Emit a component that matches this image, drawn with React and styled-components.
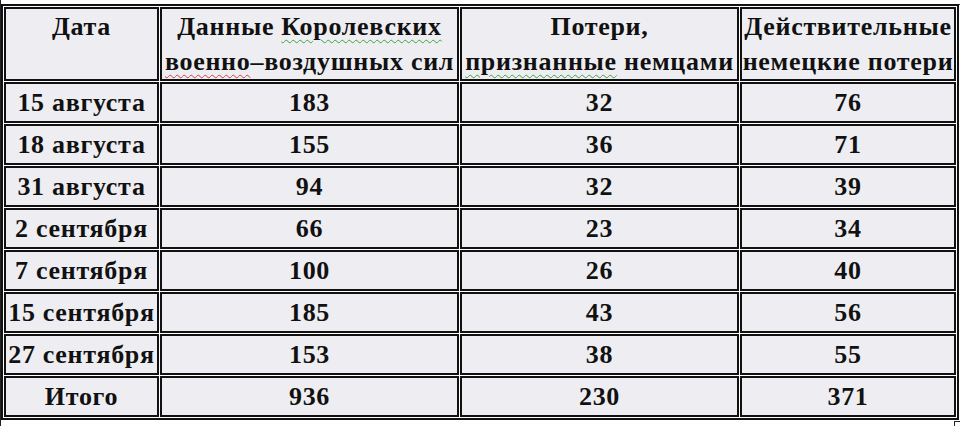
import React from "react";
import styled, { createGlobalStyle } from "styled-components";

const Global = createGlobalStyle`
  html, body { margin: 0; padding: 0; background: #ffffff; }
  body { font-family: "Liberation Serif", "Times New Roman", serif; color: #111; }
`;

const Page = styled.div`
  width: 960px;
  height: 426px;
  overflow: hidden;
  display: flex;
  flex-direction: column;
  padding-top: 4px;
  box-sizing: border-box;
  border-left: 1px solid #222;
`;

const DottedRule = styled.div`
  height: 0;
  border-top: 1px dotted #333;
  margin-bottom: -1px;
`;

const Table = styled.table`
  width: 957px;
  border: 2px solid #111;
  border-spacing: 1px;
  background: #fff;
  table-layout: fixed;
`;

const Cell = styled.td`
  background: #eeeef2;
  border: 2px solid #111;
  box-sizing: border-box;
  padding: 0;
  text-align: center;
  vertical-align: middle;
  font-weight: bold;
  font-size: 26px;
  letter-spacing: 0.7px;
  line-height: ${(p) => (p.$head ? "35px" : "36px")};
  white-space: nowrap;
  overflow: hidden;
  height: ${(p) => (p.$head ? "74px" : "41px")};
  color: #111;
`;

const Squiggle = styled.span`
  text-decoration: underline wavy ${(p) => (p.$red ? "#d04040" : "#3aa53a")};
  text-decoration-thickness: 1px;
  text-underline-offset: 4px;
`;

const Footer = styled.div`
  display: flex;
  justify-content: flex-end;
  padding-top: 1px;
`;

const CornerMark = styled.div`
  width: 5px;
  height: 6px;
  border-left: 1px solid #222;
  border-top: 1px solid #222;
`;

const rows = [
  ["15 августа", "183", "32", "76"],
  ["18 августа", "155", "36", "71"],
  ["31 августа", "94", "32", "39"],
  ["2 сентября", "66", "23", "34"],
  ["7 сентября", "100", "26", "40"],
  ["15 сентября", "185", "43", "56"],
  ["27 сентября", "153", "38", "55"],
  ["Итого", "936", "230", "371"],
];

export default function App() {
  return (
    <>
      <Global />
      <Page>
        <DottedRule />
        <Table>
          <colgroup>
            <col style={{ width: "155px" }} />
            <col style={{ width: "299px" }} />
            <col style={{ width: "279px" }} />
            <col style={{ width: "216px" }} />
          </colgroup>
          <tbody>
            <tr>
              <Cell $head>
                Дата
                <br />
                &nbsp;
              </Cell>
              <Cell $head>
                Данные <Squiggle>Королевских</Squiggle>
                <br />
                <Squiggle $red>военно</Squiggle>–воздушных сил
              </Cell>
              <Cell $head>
                Потери,
                <br />
                <Squiggle>признанные</Squiggle> немцами
              </Cell>
              <Cell $head>
                Действительные
                <br />
                немецкие потери
              </Cell>
            </tr>
            {rows.map((r) => (
              <tr key={r[0]}>
                {r.map((v, i) => (
                  <Cell key={i}>{v}</Cell>
                ))}
              </tr>
            ))}
          </tbody>
        </Table>
        <Footer>
          <CornerMark />
        </Footer>
      </Page>
    </>
  );
}
